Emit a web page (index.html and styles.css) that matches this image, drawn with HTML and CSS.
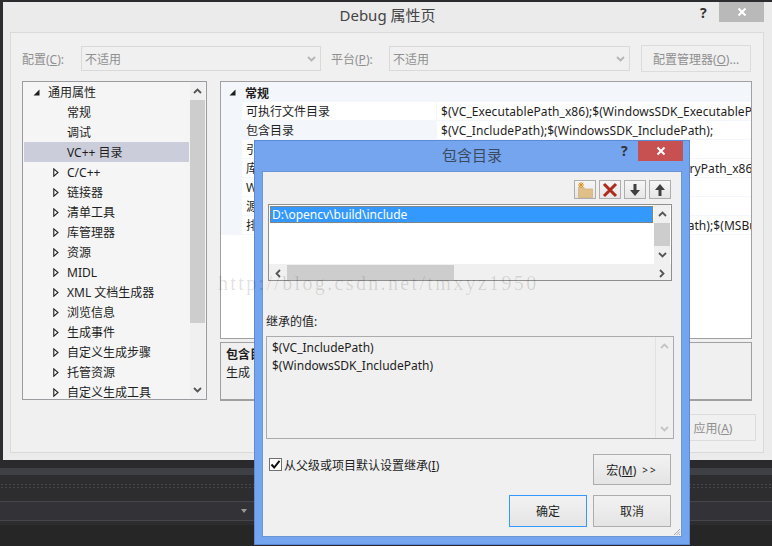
FILE: index.html
```html
<!DOCTYPE html>
<html>
<head>
    <meta charset="utf-8">
    <link rel="stylesheet" href="styles.css">
</head>
<body>
    <svg class="defs" width="0" height="0">
        <symbol id="chev-up" viewBox="0 0 9 6"><path d="M1 5 L4.5 1.5 L8 5" fill="none" stroke="currentColor" stroke-width="1.8"/></symbol>
        <symbol id="chev-down" viewBox="0 0 9 6"><path d="M1 1 L4.5 4.5 L8 1" fill="none" stroke="currentColor" stroke-width="1.8"/></symbol>
        <symbol id="chev-left" viewBox="0 0 6 9"><path d="M5 1 L1.5 4.5 L5 8" fill="none" stroke="currentColor" stroke-width="1.8"/></symbol>
        <symbol id="chev-right" viewBox="0 0 6 9"><path d="M1 1 L4.5 4.5 L1 8" fill="none" stroke="currentColor" stroke-width="1.8"/></symbol>
        <symbol id="tri-open" viewBox="0 0 7 7"><path d="M6.5 0.5 V6.5 H0.5 Z" fill="#1e1e1e"/></symbol>
        <symbol id="tri-closed" viewBox="0 0 6 9"><path d="M0.8 0.8 L5 4.5 L0.8 8.2 Z" fill="#fff" stroke="#1e1e1e" stroke-width="1.1"/></symbol>
        <symbol id="close-x" viewBox="0 0 10 10"><path d="M1.5 1.5 L8.5 8.5 M8.5 1.5 L1.5 8.5" fill="none" stroke="#fff" stroke-width="2"/></symbol>
    </svg>

    <div class="desktop-bars">
        <div class="bar bar-gap"></div>
        <div class="bar bar-light"></div>
        <div class="bar bar-dots"><div class="dots"></div></div>
        <div class="bar bar-combo"><span class="combo-arrow"></span></div>
        <div class="bar bar-bottom"></div>
    </div>

    <!-- main property window -->
    <div class="window prop-window">
        <div class="title-bar">Debug 属性页</div>
        <span class="help-mark">?</span>
        <span class="close-btn close-idle"><svg width="10" height="10"><use href="#close-x"/></svg></span>

        <div class="panel">
            <div class="top-row">
                <label class="muted config-label">配置(<u>C</u>):</label>
                <div class="combo combo-config">不适用<svg class="combo-chev" width="9" height="6"><use href="#chev-down"/></svg></div>
                <label class="muted platform-label">平台(<u>P</u>):</label>
                <div class="combo combo-platform">不适用<svg class="combo-chev" width="9" height="6"><use href="#chev-down"/></svg></div>
                <div class="btn-flat config-btn"><span>配置管理器(<u>O</u>)...</span></div>
            </div>

            <div class="main-row">
                <div class="tree">
                    <div class="tree-items">
                        <div class="tree-row root"><svg width="7" height="7"><use href="#tri-open"/></svg>通用属性</div>
                        <div class="tree-row leaf">常规</div>
                        <div class="tree-row leaf">调试</div>
                        <div class="tree-row leaf selected">VC++ 目录</div>
                        <div class="tree-row branch"><svg width="6" height="9"><use href="#tri-closed"/></svg>C/C++</div>
                        <div class="tree-row branch"><svg width="6" height="9"><use href="#tri-closed"/></svg>链接器</div>
                        <div class="tree-row branch"><svg width="6" height="9"><use href="#tri-closed"/></svg>清单工具</div>
                        <div class="tree-row branch"><svg width="6" height="9"><use href="#tri-closed"/></svg>库管理器</div>
                        <div class="tree-row branch"><svg width="6" height="9"><use href="#tri-closed"/></svg>资源</div>
                        <div class="tree-row branch"><svg width="6" height="9"><use href="#tri-closed"/></svg>MIDL</div>
                        <div class="tree-row branch"><svg width="6" height="9"><use href="#tri-closed"/></svg>XML 文档生成器</div>
                        <div class="tree-row branch"><svg width="6" height="9"><use href="#tri-closed"/></svg>浏览信息</div>
                        <div class="tree-row branch"><svg width="6" height="9"><use href="#tri-closed"/></svg>生成事件</div>
                        <div class="tree-row branch"><svg width="6" height="9"><use href="#tri-closed"/></svg>自定义生成步骤</div>
                        <div class="tree-row branch"><svg width="6" height="9"><use href="#tri-closed"/></svg>托管资源</div>
                        <div class="tree-row branch"><svg width="6" height="9"><use href="#tri-closed"/></svg>自定义生成工具</div>
                    </div>
                    <div class="vscroll tree-scroll">
                        <div class="arrow"><svg width="9" height="6"><use href="#chev-up"/></svg></div>
                        <div class="track"><div class="thumb tree-thumb"></div></div>
                        <div class="arrow"><svg width="9" height="6"><use href="#chev-down"/></svg></div>
                    </div>
                </div>

                <div class="right-col">
                    <div class="grid-box">
                        <div class="grid-head"><svg width="7" height="7"><use href="#tri-open"/></svg>常规</div>
                        <div class="grid-row"><div class="cell-name">可执行文件目录</div><div class="cell-value">$(VC_ExecutablePath_x86);$(WindowsSDK_ExecutablePath_x86)</div></div>
                        <div class="grid-row current"><div class="cell-name">包含目录</div><div class="cell-value">$(VC_IncludePath);$(WindowsSDK_IncludePath);</div></div>
                        <div class="grid-row"><div class="cell-name">引用目录</div><div class="cell-value">$(VC_ReferencesPath_x86);</div></div>
                        <div class="grid-row"><div class="cell-name">库目录</div><div class="cell-value">$(VC_LibraryPath_x86);$(WindowsSDK_LibraryPath_x86)</div></div>
                        <div class="grid-row"><div class="cell-name">Windows 运行库目录</div><div class="cell-value">$(WindowsSDK_MetadataPath);</div></div>
                        <div class="grid-row"><div class="cell-name">源目录</div><div class="cell-value">$(VC_SourcePath);</div></div>
                        <div class="grid-row"><div class="cell-name">排除目录</div><div class="cell-value">$(VC_IncludePath);$(WindowsSDK_IncludePath);$(MSBuild_ExecutablePath)</div></div>
                    </div>
                    <div class="desc-box">
                        <div class="desc-title">包含目录</div>
                        <div>生成&nbsp;&nbsp;VC++ 项目期间使用的路径</div>
                    </div>
                </div>
            </div>

            <div class="bottom-row">
                <div class="btn-flat apply-btn"><span>应用(<u>A</u>)</span></div>
            </div>
        </div>
    </div>

    <!-- include directories dialog -->
    <div class="window include-dialog">
        <div class="title-bar dialog-title">包含目录</div>
        <span class="help-mark dialog-help">?</span>
        <span class="close-btn close-red"><svg width="10" height="10"><use href="#close-x"/></svg></span>

        <div class="dialog-body">
            <div class="toolbar">
                <div class="tool-btn">
                    <svg width="18" height="16" viewBox="0 0 18 16">
                        <path d="M2.5 5.5 H8 L9 7 H16.5 V15.5 H2.5 Z" fill="#dfc08a" stroke="#cda76a" stroke-width="0.6"/>
                        <path d="M5 0 V6 M2 3 H8 M2.8 0.8 L7.2 5.2 M7.2 0.8 L2.8 5.2" stroke="#d8921c" stroke-width="1"/>
                    </svg>
                </div>
                <div class="tool-btn">
                    <svg width="16" height="16" viewBox="0 0 16 16"><path d="M2 2 L14 14 M14 2 L2 14" fill="none" stroke="#b02a1c" stroke-width="3"/></svg>
                </div>
                <div class="tool-btn">
                    <svg width="12" height="14" viewBox="0 0 12 14"><path d="M4.5 1 H7.5 V7 H11 L6 13 L1 7 H4.5 Z" fill="#404040"/></svg>
                </div>
                <div class="tool-btn">
                    <svg width="12" height="14" viewBox="0 0 12 14"><path d="M4.5 13 H7.5 V7 H11 L6 1 L1 7 H4.5 Z" fill="#404040"/></svg>
                </div>
            </div>

            <div class="path-list">
                <div class="path-main">
                    <div class="path-rows">
                        <div class="path-row active">D:\opencv\build\include</div>
                    </div>
                    <div class="vscroll list-scroll">
                        <div class="arrow"><svg width="9" height="6"><use href="#chev-up"/></svg></div>
                        <div class="track"><div class="thumb list-thumb"></div></div>
                        <div class="arrow"><svg width="9" height="6"><use href="#chev-down"/></svg></div>
                    </div>
                </div>
                <div class="hscroll">
                    <div class="arrow"><svg width="6" height="9"><use href="#chev-left"/></svg></div>
                    <div class="h-track"><div class="h-thumb"></div></div>
                    <div class="arrow"><svg width="6" height="9"><use href="#chev-right"/></svg></div>
                </div>
            </div>

            <div class="inherit-label">继承的值:</div>
            <div class="inherit-box">
                <div class="inherit-text">
                    <div>$(VC_IncludePath)</div>
                    <div>$(WindowsSDK_IncludePath)</div>
                </div>
                <div class="vscroll inherit-scroll">
                    <div class="arrow"><svg width="9" height="6"><use href="#chev-up"/></svg></div>
                    <div class="track"></div>
                    <div class="arrow"><svg width="9" height="6"><use href="#chev-down"/></svg></div>
                </div>
            </div>

            <div class="check-row">
                <div class="check-wrap">
                    <span class="checkbox"><svg width="11" height="11" viewBox="0 0 11 11"><path d="M1.5 5.5 L4.2 8.5 L9.5 1.8" fill="none" stroke="#111" stroke-width="2"/></svg></span>
                    <span>从父级或项目默认设置继承(<u>I</u>)</span>
                </div>
                <div class="btn-raised"><span>宏(<u>M</u>)</span><span class="more">&gt;&gt;</span></div>
            </div>

            <div class="action-row">
                <div class="btn-raised btn-default">确定</div>
                <div class="btn-raised">取消</div>
            </div>
            <svg class="grip" width="8" height="8" viewBox="0 0 8 8"><path d="M7 1 L1 7 M7 3.5 L3.5 7 M7 6 L6 7" stroke="#a8a8a8" stroke-width="1"/></svg>
        </div>
    </div>

    <div class="watermark">http://blog.csdn.net/tmxyz1950</div>
</body>
</html>
```

FILE: styles.css
```css
* {
    box-sizing: border-box;
}

html, body {
    margin: 0;
    padding: 0;
    height: 100%;
    overflow: hidden;
}

body {
    position: relative;
    width: 772px;
    height: 546px;
    background-color: #2d2d30;
    font-family: "Noto Sans", "Noto Sans CJK SC", sans-serif;
    font-size: 12px;
    color: #1e1e1e;
}

.defs {
    position: absolute;
}

u {
    text-decoration: underline;
}

svg {
    display: block;
    flex: none;
}

/* dark IDE behind the windows */
.desktop-bars {
    padding-top: 460px;
}

.bar-gap {
    height: 8px;
    background-color: #2a2a2c;
}

.bar-light {
    height: 7px;
    background-color: #3f3f46;
}

.bar-dots {
    height: 26px;
    padding-top: 8px;
    background-color: #2d2d30;
}

.dots {
    height: 7px;
    background-image: radial-gradient(#46464c 1px, transparent 1px);
    background-size: 4px 3px;
}

.bar-combo {
    display: flex;
    justify-content: flex-end;
    align-items: center;
    height: 20px;
    padding-right: 525px;
    background-color: #333337;
    border-top: 1px solid #46464a;
    border-bottom: 1px solid #46464a;
}

.combo-arrow {
    width: 0;
    height: 0;
    border-left: 3px solid transparent;
    border-right: 3px solid transparent;
    border-top: 4px solid #999;
}

.bar-bottom {
    height: 25px;
    border-top: 4px solid #2d2d30;
    background-color: #262627;
}

/* windows */
.window {
    position: absolute;
}

.prop-window {
    left: 3px;
    top: 2px;
    width: 769px;
    height: 458px;
    background-color: #ebebeb;
}

.title-bar {
    height: 30px;
    line-height: 27px;
    text-align: center;
    font-size: 15px;
    color: #444;
}

.help-mark {
    position: absolute;
    left: 697px;
    top: 1px;
    font-size: 14px;
    font-weight: bold;
    line-height: 20px;
    color: #333;
}

.close-btn {
    position: absolute;
    display: flex;
    align-items: center;
    justify-content: center;
    width: 45px;
    height: 20px;
}

.close-idle {
    left: 716px;
    top: 0;
    background-color: #b9b9b9;
}

.close-red {
    left: 383px;
    top: 0;
    background-color: #c75050;
}

.panel {
    width: 754px;
    height: 421px;
    margin-left: 7px;
    padding: 12px 7px 0 11px;
    background-color: #f0f0f0;
    border: 1px solid #dadada;
}

.top-row {
    display: flex;
    align-items: center;
    height: 27px;
}

.muted, .combo, .btn-flat {
    color: #8f8f8f;
}

.config-label {
    width: 59px;
}

.platform-label {
    width: 58px;
    margin-left: 10px;
}

.combo {
    display: flex;
    align-items: center;
    justify-content: space-between;
    height: 25px;
    padding: 0 4px 0 3px;
    border: 1px solid #d9d9d9;
}

.combo-config {
    width: 240px;
}

.combo-platform {
    width: 241px;
}

.combo-chev {
    color: #b4b4b4;
}

.btn-flat {
    display: flex;
    align-items: center;
    justify-content: center;
    border: 1px solid #dcdcdc;
}

.config-btn {
    width: 110px;
    height: 27px;
    margin-left: 11px;
}

.main-row {
    display: flex;
    gap: 13px;
    margin-top: 9px;
}

/* tree */
.tree {
    display: flex;
    width: 185px;
    height: 319px;
    overflow: hidden;
    background-color: #f5f5f5;
    border: 1px solid #9a9a9f;
}

.tree-items {
    width: 166px;
    overflow: hidden;
}

.tree-row {
    display: flex;
    align-items: center;
    height: 20px;
    white-space: nowrap;
}

.tree-row.root {
    padding-left: 10px;
    gap: 8px;
}

.tree-row.leaf {
    padding-left: 44px;
}

.tree-row.selected {
    margin-left: 1px;
    padding-left: 43px;
    background-color: #cbcddb;
}

.tree-row.branch {
    padding-left: 30px;
    gap: 8px;
}

.vscroll {
    display: flex;
    flex-direction: column;
    flex: none;
    color: #555;
}

.tree-scroll {
    width: 15px;
    margin-left: 1px;
    background-color: #f0f0f0;
}

.vscroll .arrow {
    display: flex;
    align-items: center;
    justify-content: center;
    height: 18px;
}

.vscroll .track {
    flex: 1;
}

.thumb {
    background-color: #cdcdcd;
}

.tree-thumb {
    height: 223px;
}

/* settings grid */
.right-col {
    display: flex;
    flex-direction: column;
    gap: 3px;
    width: 532px;
}

.grid-box {
    height: 258px;
    overflow: hidden;
    background-color: #fff;
    border: 1px solid #a0a0a0;
}

.grid-head {
    display: flex;
    align-items: center;
    gap: 9px;
    height: 20px;
    padding: 1px 0 0 8px;
    font-weight: bold;
    background-color: #f3f6fb;
}

.grid-row {
    display: flex;
    height: 19px;
    line-height: 20px;
    white-space: nowrap;
    background-color: #f3f6fb;
    padding-left: 21px;
}

.cell-name {
    width: 194px;
    padding-left: 4px;
    margin-bottom: 1px;
    background-color: #fff;
}

.cell-value {
    flex: 1;
    overflow: hidden;
    padding-left: 4px;
    margin: 0 0 1px 1px;
    letter-spacing: 0.07px;
    background-color: #fff;
}

.grid-row.current .cell-name {
    background-color: #f3f6fb;
}

.desc-box {
    height: 59px;
    padding: 3px 5px;
    line-height: 18px;
    background-color: #f0f0f0;
    border: 1px solid #a0a0a0;
    border-bottom-width: 2px;
}

.desc-title {
    font-weight: bold;
}

.bottom-row {
    display: flex;
    justify-content: flex-end;
    margin-top: 13px;
}

.apply-btn {
    width: 96px;
    height: 27px;
    padding-left: 10px;
}

/* dialog */
.include-dialog {
    left: 254px;
    top: 140px;
    width: 436px;
    height: 405px;
    background-color: #74a5ee;
    border: 1px solid #5b8bd6;
}

.dialog-title {
    line-height: 29px;
    color: #3c4a5e;
}

.dialog-help {
    left: 366px;
    top: 0;
}

.dialog-body {
    position: relative;
    width: 420px;
    height: 366px;
    margin-left: 7px;
    padding-top: 8px;
    background-color: #f0f0f0;
    border: 1px solid #6b95d4;
}

.toolbar {
    display: flex;
    justify-content: flex-end;
    gap: 3px;
    padding-right: 10px;
}

.tool-btn {
    display: flex;
    align-items: center;
    justify-content: center;
    width: 22px;
    height: 19px;
    border: 1px solid #adadad;
    background-image: linear-gradient(#f6f6f6, #e6e6e6);
}

.path-list {
    width: 404px;
    height: 77px;
    margin: 5px 0 0 5px;
    background-color: #f0f0f0;
    border: 1px solid #8f8f8f;
}

.path-main {
    display: flex;
    height: 59px;
    background-color: #fff;
}

.path-rows {
    width: 385px;
    padding: 1px 1px 0 1px;
}

.path-row.active {
    height: 17px;
    line-height: 17px;
    padding-left: 2px;
    color: #fff;
    background-color: #3399ff;
    outline: 1px dotted #c9741a;
    outline-offset: -1px;
}

.list-scroll {
    width: 16px;
    background-color: #f0f0f0;
}

.list-thumb {
    height: 23px;
}

.hscroll {
    display: flex;
    height: 17px;
    padding-top: 1px;
    color: #555;
}

.hscroll .arrow {
    display: flex;
    align-items: center;
    justify-content: center;
    width: 18px;
}

.h-track {
    width: 366px;
}

.h-thumb {
    width: 167px;
    height: 15px;
    background-color: #cdcdcd;
}

.inherit-label {
    height: 17px;
    margin: 32px 0 6px 3px;
    line-height: 17px;
}

.inherit-box {
    display: flex;
    width: 408px;
    height: 103px;
    margin-left: 3px;
    border: 1px solid #ababab;
}

.inherit-text {
    flex: 1;
    padding: 2px 5px;
    line-height: 18px;
}

.inherit-scroll {
    width: 18px;
    color: #c4c4c4;
    border-left: 1px solid #e2e2e2;
}

.check-row {
    display: flex;
    justify-content: space-between;
    height: 31px;
    margin: 15px 10px 0 6px;
}

.check-wrap {
    display: flex;
    align-items: center;
    gap: 2px;
    height: 21px;
}

.checkbox {
    display: flex;
    align-items: center;
    justify-content: center;
    width: 13px;
    height: 13px;
    background-color: #fff;
    border: 1px solid #707070;
}

.btn-raised {
    display: flex;
    align-items: center;
    justify-content: center;
    gap: 4px;
    width: 78px;
    height: 31px;
    border: 1px solid #adadad;
    background-image: linear-gradient(#f2f2f2, #e4e4e4);
}

.more {
    font-size: 10px;
    letter-spacing: 2px;
    margin-left: 2px;
}

.action-row {
    display: flex;
    justify-content: flex-end;
    gap: 6px;
    margin: 10px 10px 0 0;
}

.action-row .btn-raised {
    height: 32px;
}

.btn-default {
    border-color: #3399ff;
}

.grip {
    position: absolute;
    right: 0;
    bottom: 0;
}

.watermark {
    position: absolute;
    left: 218px;
    top: 271px;
    font-family: "Liberation Serif", serif;
    font-size: 20px;
    letter-spacing: 2.35px;
    line-height: 24px;
    white-space: nowrap;
    color: rgba(0, 0, 0, 0.13);
}
```
